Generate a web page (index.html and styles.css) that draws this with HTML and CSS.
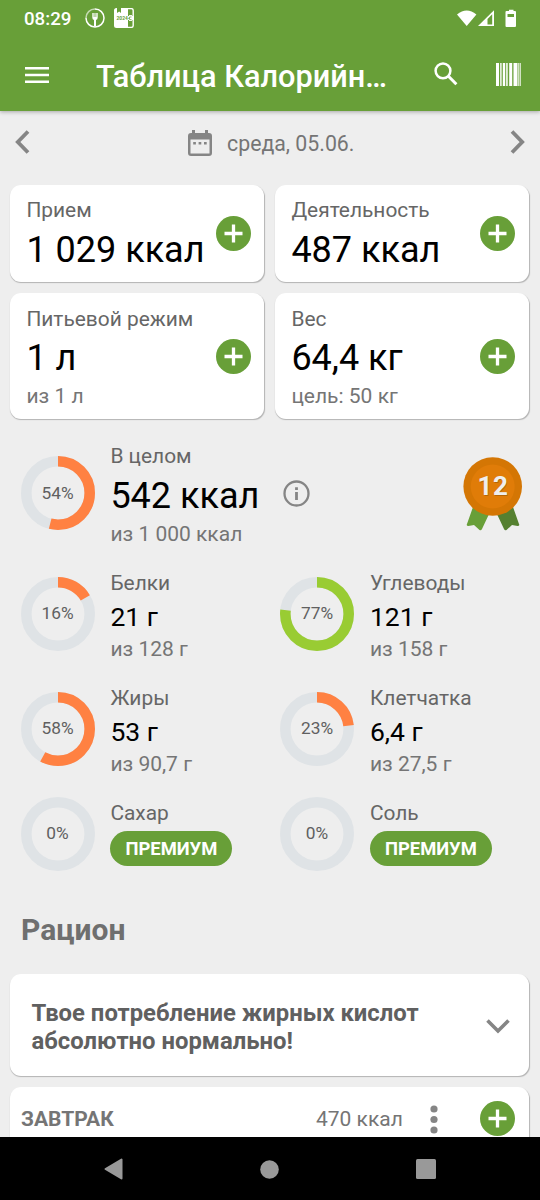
FILE: index.html
```html
<!DOCTYPE html>
<html lang="ru">
<head>
<meta charset="utf-8">
<title>Таблица Калорийности</title>
<link rel="stylesheet" href="styles.css">
</head>
<body>
<svg class="defs" width="0" height="0">
  <symbol id="plus" viewBox="0 0 35 35"><circle cx="17.5" cy="17.5" r="17.5" fill="#689f38"/><path d="M17.5 8.5v18M8.5 17.5h18" stroke="#fff" stroke-width="3.3"/></symbol>
</svg>
<div class="phone">
  <header class="top">
    <div class="status">
      <span class="clock">08:29</span>
      <svg class="fork" width="20" height="20" viewBox="0 0 20 20"><path d="M10 1a9 9 0 1 1-9 9" fill="none" stroke="#fff" stroke-width="1.5"/><path d="M1 10a9 9 0 0 1 9-9" fill="none" stroke="#c3daaf" stroke-width="1.5"/><path d="M7.300 5h5.400v4.500q0 2-1.700 2.500v6.500H9V12q-1.700-.5-1.700-2.500z" fill="#fff"/><path d="M9.100 5v4M10.900 5v4" stroke="#689f38" stroke-width=".7"/></svg>
      <svg class="book" width="20" height="20" viewBox="0 0 20 20"><path d="M2.500 0H3v5l2.200-1.500L7 5V0h7v20H2.500Q0 20 0 17.500V2.500Q0 0 2.500 0z" fill="#fff"/><path d="M14 .6h3.200q2 0 2 2V8M19.200 12v5.400q0 2-2 2H14" fill="none" stroke="#fff" stroke-width="1.400"/><path d="M13 8h7v4h-7z" fill="#fff"/><path d="M15 7.600h3M15 12.400h3" stroke="#fff"/><text x="2.500" y="12" class="book-text">2024</text><path d="M17.500 9h-2v2.500h2M14 10.300h1.500" fill="none" stroke="#689f38" stroke-width=".7"/></svg>
      <svg class="signals" width="62" height="20" viewBox="0 0 62 20"><path d="M0 5.500Q9.700-2.500 19.400 5.500L9.700 17z" fill="#fff"/><path d="M21 17H37V1.200z" fill="#fff"/><path d="M30.500 10v5.400h4.700V5.300z" fill="#689f38"/><path d="M48.500 3q0-1 1-1H52V.8h4.500V2H58q1 0 1 1V17q0 1-1 1h-8.500q-1 0-1-1z" fill="#fff"/><path d="M50.500 5h6.500v3h-6.500z" fill="#689f38"/></svg>
    </div>
    <div class="appbar">
      <svg class="menu" width="24" height="16" viewBox="0 0 24 16"><path d="M0 1.300h24M0 8h24M0 14.700h24" stroke="#fff" stroke-width="2.600"/></svg>
      <h1 class="title">Таблица Калорийн…</h1>
      <svg class="search" width="24" height="24" viewBox="0 0 24 24"><circle cx="9" cy="8.800" r="7.400" fill="none" stroke="#fff" stroke-width="2.500"/><path d="M14.200 14l8.200 8.200" stroke="#fff" stroke-width="3"/></svg>
      <svg class="barcode" width="25" height="23" viewBox="0 0 25 23"><path d="M0 0h3v23H0zM4.200 0h1.400v23H4.200zM6.800 0h2.400v23H6.800zM10.200 0h1.500v23h-1.500zM13.200 0h3v23h-3zM17.500 0h4v23h-4zM22.300 0h.900v23h-.9zM23.800 0h.900v23h-.9z" fill="#fff"/></svg>
    </div>
  </header>

  <nav class="date">
    <svg width="15" height="24" viewBox="0 0 15 24"><path d="M13 1.500L2.800 12 13 22.500" fill="none" stroke="#858585" stroke-width="3.800"/></svg>
    <div class="day">
      <svg width="24" height="27" viewBox="0 0 24 27"><path d="M3 3h1V0h3v3h10V0h3v3h1q3 0 3 3v17q0 3-3 3H3q-3 0-3-3V6q0-3 3-3z" fill="#858585"/><path d="M2.500 9.500h19v14h-19z" fill="#eee"/><path d="M5.200 12h2.700v2.600H5.200zM10.600 12h2.700v2.600h-2.700zM16 12h2.700v2.600H16z" fill="#858585"/></svg>
      <span>среда, 05.06.</span>
    </div>
    <svg width="15" height="24" viewBox="0 0 15 24"><path d="M2 1.500L12.200 12 2 22.500" fill="none" stroke="#858585" stroke-width="3.800"/></svg>
  </nav>

  <section class="cards">
    <article class="card"><div><p class="label">Прием</p><p class="big">1 029 ккал</p></div><svg class="plus"><use href="#plus"/></svg></article>
    <article class="card"><div><p class="label">Деятельность</p><p class="big">487 ккал</p></div><svg class="plus"><use href="#plus"/></svg></article>
    <article class="card tall"><div><p class="label">Питьевой режим</p><p class="big">1 л</p><p class="sub">из 1 л</p></div><svg class="plus"><use href="#plus"/></svg></article>
    <article class="card tall"><div><p class="label">Вес</p><p class="big">64,4 кг</p><p class="sub">цель: 50 кг</p></div><svg class="plus"><use href="#plus"/></svg></article>
  </section>

  <section class="total">
    <div class="ring orange"><svg viewBox="0 0 74 74"><circle class="track" cx="37" cy="37" r="31.700"/><circle class="arc" cx="37" cy="37" r="31.700" pathLength="100" stroke-dasharray="54 100"/></svg><span>54%</span></div>
    <div class="facts"><p class="label">В целом</p><p class="big">542 ккал</p><p class="sub">из 1 000 ккал</p></div>
    <svg class="info" width="27" height="27" viewBox="0 0 27 27"><circle cx="13.500" cy="13.500" r="12" fill="none" stroke="#858585" stroke-width="2.300"/><path d="M13.500 12v8M13.500 7.200v2.800" stroke="#858585" stroke-width="2.800"/></svg>
    <svg class="medal" width="60" height="75" viewBox="0 0 60 75"><path d="M10 50L4 67q-1 2 1.500 2l5.500-1 5.500 5q1.500 1 2.500-1L27 55z" fill="#689f38"/><path d="M50 50l6 17q1 2-1.500 2l-5.500-1-5.500 5q-1.500 1-2.500-1L33 55z" fill="#558030"/><circle cx="29.700" cy="29.500" r="29.300" fill="#d47604"/><circle cx="29.700" cy="29.500" r="22" fill="#e07c08"/><text x="30.400" y="39" class="medal-shadow">12</text><text x="29.900" y="38.400" class="medal-number">12</text></svg>
  </section>

  <section class="nutrients">
    <div class="nutrient"><div class="ring orange"><svg viewBox="0 0 74 74"><circle class="track" cx="37" cy="37" r="31.700"/><circle class="arc" cx="37" cy="37" r="31.700" pathLength="100" stroke-dasharray="16.500 100"/></svg><span>16%</span></div><div class="facts"><p class="label">Белки</p><p class="value">21 г</p><p class="sub">из 128 г</p></div></div>
    <div class="nutrient"><div class="ring lime"><svg viewBox="0 0 74 74"><circle class="track" cx="37" cy="37" r="31.700"/><circle class="arc" cx="37" cy="37" r="31.700" pathLength="100" stroke-dasharray="77 100"/></svg><span>77%</span></div><div class="facts"><p class="label">Углеводы</p><p class="value">121 г</p><p class="sub">из 158 г</p></div></div>
    <div class="nutrient"><div class="ring orange"><svg viewBox="0 0 74 74"><circle class="track" cx="37" cy="37" r="31.700"/><circle class="arc" cx="37" cy="37" r="31.700" pathLength="100" stroke-dasharray="58 100"/></svg><span>58%</span></div><div class="facts"><p class="label">Жиры</p><p class="value">53 г</p><p class="sub">из 90,7 г</p></div></div>
    <div class="nutrient"><div class="ring orange"><svg viewBox="0 0 74 74"><circle class="track" cx="37" cy="37" r="31.700"/><circle class="arc" cx="37" cy="37" r="31.700" pathLength="100" stroke-dasharray="23.300 100"/></svg><span>23%</span></div><div class="facts"><p class="label">Клетчатка</p><p class="value">6,4 г</p><p class="sub">из 27,5 г</p></div></div>
    <div class="nutrient last"><div class="ring"><svg viewBox="0 0 74 74"><circle class="track" cx="37" cy="37" r="31.700"/></svg><span>0%</span></div><div class="facts"><p class="label">Сахар</p><p class="premium">ПРЕМИУМ</p></div></div>
    <div class="nutrient last"><div class="ring"><svg viewBox="0 0 74 74"><circle class="track" cx="37" cy="37" r="31.700"/></svg><span>0%</span></div><div class="facts"><p class="label">Соль</p><p class="premium">ПРЕМИУМ</p></div></div>
  </section>

  <h2 class="heading">Рацион</h2>
  <article class="tip"><p>Твое потребление жирных кислот<br>абсолютно нормально!</p><svg width="24" height="15" viewBox="0 0 24 15"><path d="M1.500 1.500L12 12 22.500 1.500" fill="none" stroke="#858585" stroke-width="3.600"/></svg></article>
  <article class="meal"><b>ЗАВТРАК</b><span>470 ккал</span><svg class="dots" width="8" height="29" viewBox="0 0 8 29"><g fill="#858585"><circle cx="4" cy="4" r="3.600"/><circle cx="4" cy="14.500" r="3.600"/><circle cx="4" cy="25" r="3.600"/></g></svg><svg class="plus"><use href="#plus"/></svg></article>

  <footer class="system">
    <svg width="19" height="22" viewBox="0 0 19 22"><path d="M17.500 1.500v19L1.500 11z" fill="#999" stroke="#999" stroke-width="2" stroke-linejoin="round"/></svg>
    <svg width="19" height="19" viewBox="0 0 19 19"><circle cx="9.500" cy="9.500" r="9.300" fill="#999"/></svg>
    <svg width="20" height="20" viewBox="0 0 20 20"><rect width="20" height="20" rx="1.500" fill="#999"/></svg>
  </footer>
</div>
</body>
</html>
```
FILE: styles.css
```css
* { box-sizing: border-box; }
body { margin: 0; font-family: Roboto, sans-serif; background: #eee; }
p, h1, h2 { margin: 0; }
svg { display: block; flex: none; }
.defs { position: absolute; }
.phone { width: 540px; height: 1200px; overflow: hidden; display: flex; flex-direction: column; background: #eee; }
.phone > * { flex: none; }

.top { height: 111px; background: #689f38; color: #fff; box-shadow: 0 1px 4px rgba(0,0,0,.3); }
.status { height: 37px; padding: 8px 21.500px 0 24px; display: flex; }
.clock { font-size: 18.700px; font-weight: 500; line-height: 23px; width: 61px; }
.fork { margin-right: 9px; }
.signals { margin: 1px -.5px 0 auto; }
.book-text { font: 700 5px Roboto, sans-serif; fill: #689f38; }
.appbar { height: 74px; display: flex; padding-left: 24.500px; }
.menu { margin-top: 29.500px; }
.title { font-size: 30.700px; font-weight: 500; line-height: 35px; margin: 22px 0 0 47.500px; width: 338px; white-space: nowrap; }
.search { margin-top: 25px; }
.barcode { margin: 26px 0 0 38px; }

.date { height: 73.500px; padding: 19px 15px 0; display: flex; justify-content: space-between; }
.day { display: flex; gap: 15.500px; margin-left: 2px; color: #757575; font-size: 21.300px; line-height: 28px; }
.day svg { margin-top: -.5px; }

.cards { display: grid; grid-template-columns: 254px 253.500px; gap: 11px; padding-left: 10.400px; }
.card, .tip, .meal { background: #fff; border-radius: 11px; box-shadow: .5px 1px 1px rgba(0,0,0,.25); }
.card { height: 97.500px; padding: 13.500px 13.900px 0 16px; display: flex; justify-content: space-between; }
.card .plus { margin-top: 17.500px; }
.tall { height: 126px; }
.tall .plus { margin-top: 32px; }
.plus { width: 35px; height: 35px; }
.label { font-size: 20.900px; line-height: 24px; color: #666; white-space: nowrap; }
.big { font-size: 36px; line-height: 44px; margin-top: 5.500px; color: #000; white-space: nowrap; }
.sub { font-size: 21px; line-height: 24px; margin-top: 4px; color: #757575; white-space: nowrap; }

.total { height: 128px; padding: 25px 18px 0 20.500px; display: flex; }
.ring { width: 74px; height: 74px; display: grid; flex: none; place-items: center; }
.ring > * { grid-area: 1 / 1; }
.ring svg { width: 74px; height: 74px; }
.ring circle { fill: none; stroke-width: 10.600px; }
.track { stroke: #dfe3e6; }
.arc { transform: rotate(-90deg); transform-origin: center; }
.orange .arc { stroke: #ff8142; }
.lime .arc { stroke: #99cc33; }
.ring span { font-size: 17.300px; line-height: 21px; color: #606060; }
.facts { margin-left: 15.900px; }
.total .ring { margin-top: 12px; }
.total .sub { margin-top: 4px; }
.info { margin: 36px 0 0 23.500px; }
.medal { margin: 12.500px -.5px 0 auto; }
.medal-number, .medal-shadow { font: 700 26px Roboto, sans-serif; text-anchor: middle; letter-spacing: .5px; }
.medal-number { fill: #eee; }
.medal-shadow { fill: #b56506; }

.nutrients { display: grid; grid-template-columns: 259.500px 259.500px; grid-template-rows: 115px 115px 100px; padding: 24px 0 0 20.500px; }
.nutrient { display: flex; }
.nutrient .ring { margin-top: 5.500px; }
.nutrient.last .ring { margin-top: -4.500px; }
.value { font-size: 26.500px; line-height: 31px; margin-top: 5.500px; color: #000; }
.nutrient .sub { margin-top: 5px; }
.premium { width: 122px; height: 35px; border-radius: 18px; margin-top: 6px; background: #689f38; color: #fff; font-size: 18.400px; font-weight: 700; line-height: 36px; text-align: center; }

.heading { height: 72.500px; padding: 12px 0 0 21px; font-size: 30px; line-height: 34px; color: #6f6f6f; }
.tip { width: 518.500px; height: 102px; margin: 0 0 11px 10.400px; padding: 25px 18.500px 0 21.100px; display: flex; justify-content: space-between; }
.tip p { font-size: 23.850px; line-height: 28px; font-weight: 700; color: #606060; }
.tip svg { margin-top: 20px; }
.meal { width: 518.500px; height: 100px; margin-left: 10.400px; padding: 14.500px 14px 0 10.600px; display: flex; color: #757575; font-size: 21px; line-height: 37px; }
.meal b { width: 295px; }
.meal span { width: 114px; }
.dots { margin: 3.500px 0 0; }
.meal .plus { margin-left: auto; }

.system { height: 63px; background: #000; position: fixed; left: 0; bottom: 0; width: 540px; display: flex; align-items: center; justify-content: space-between; padding: 1px 104.500px 0 103.500px; }
```
